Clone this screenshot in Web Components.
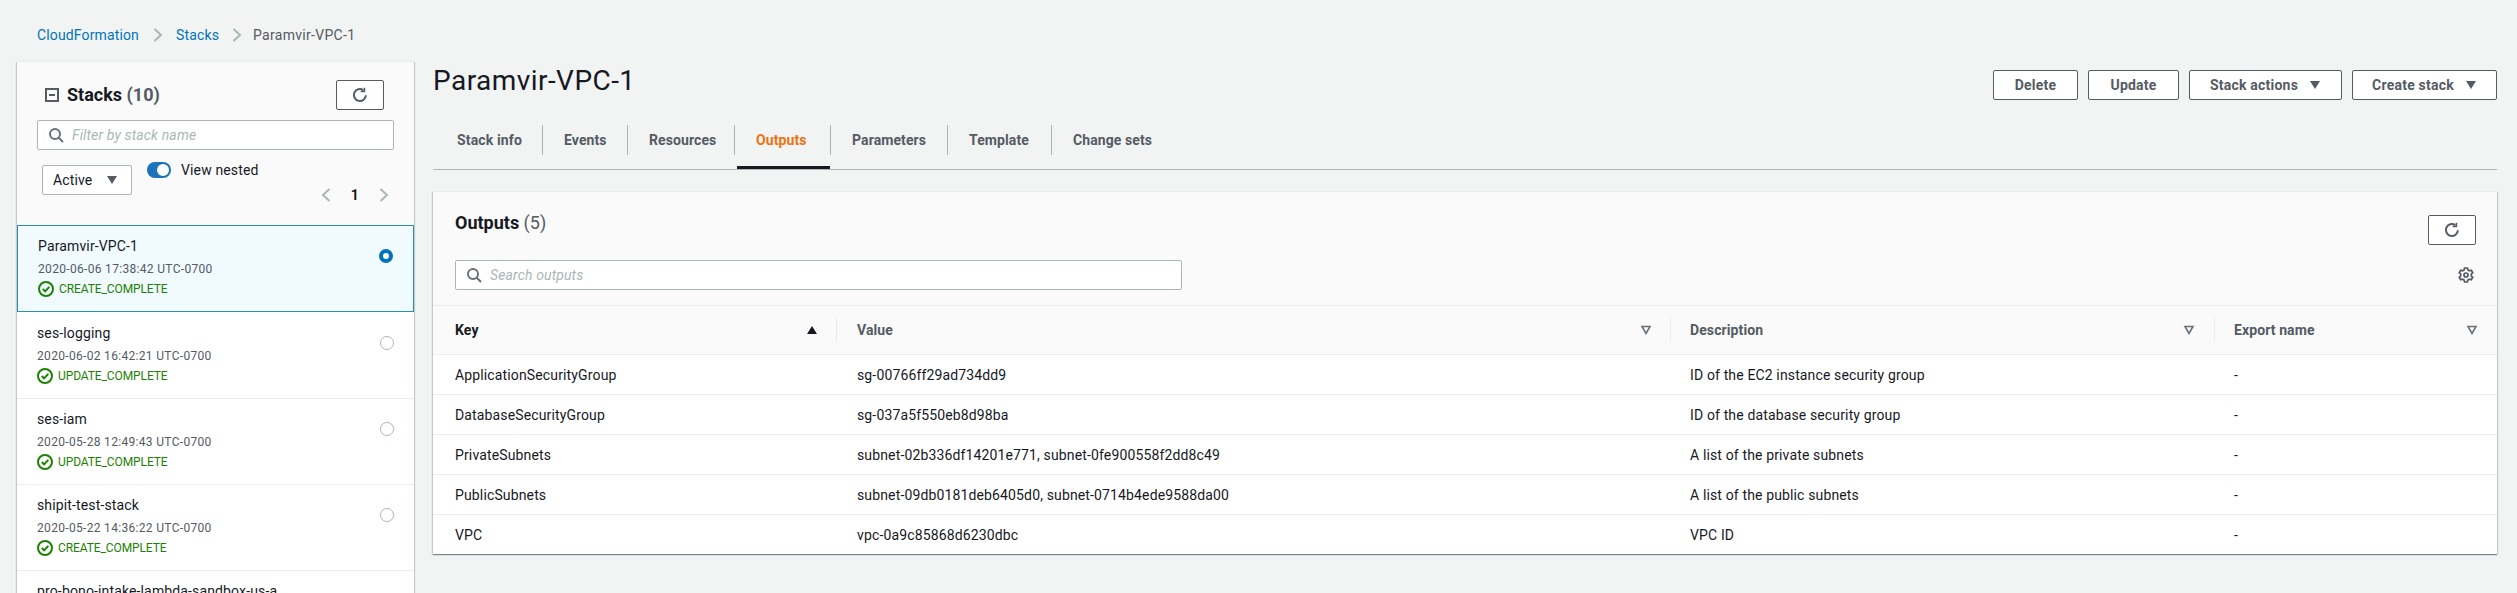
<!doctype html>
<html lang="en"><head><meta charset="utf-8"><title>Paramvir-VPC-1</title>
<style>
html,body{margin:0;height:100%;overflow:hidden;background:#f2f3f3}
body{font:14px/20px Roboto,sans-serif;letter-spacing:.14px;color:#16191f}
</style></head><body>
<cf-app></cf-app>
<script>
const ICON={
 refresh:'<svg viewBox="0 0 16 16" width="16" height="16" fill="none" stroke="#545b64" stroke-width="2"><path d="M13.9 8.2A6 6 0 1 1 11.2 3"/><path d="M12.4.8v3.6H8.8" stroke-width="1.6"/></svg>',
 search:'<svg viewBox="0 0 16 16" width="16" height="16" fill="none" stroke="#687078" stroke-width="2"><circle cx="7" cy="7" r="5"/><path d="M10.7 10.7L15 15"/></svg>',
 check:'<svg viewBox="0 0 16 16" width="16" height="16" fill="none" stroke="#1d8102" stroke-width="2"><circle cx="8" cy="8" r="7"/><path d="M4.8 8l2.3 2.4 4.2-4.6"/></svg>',
 caret:'<svg viewBox="0 0 12 10" width="12" height="10" fill="#545b64"><path d="M1 1h10L6 9z"/></svg>',
 up:'<svg viewBox="0 0 12 10" width="12" height="10" fill="#16191f"><path d="M6 1l5 8H1z"/></svg>',
 filter:'<svg viewBox="0 0 12 10" width="12" height="10" fill="none" stroke="#687078" stroke-width="1.6"><path d="M2 1.5h8L6 8.5z"/></svg>',
 gear:'<svg viewBox="0 0 16 16" width="16" height="16" fill="none" stroke="#545b64" stroke-width="1.7"><path d="M6.6 1h2.8l.5 1.9 1.5.9 1.9-.5 1.4 2.4-1.4 1.4v1.8l1.4 1.4-1.4 2.4-1.9-.5-1.5.9-.5 1.9H6.6l-.5-1.9-1.5-.9-1.9.5-1.4-2.4 1.4-1.4V7.1L1.3 5.7l1.4-2.4 1.9.5 1.5-.9z"/><circle cx="8" cy="8" r="2"/></svg>',
 minus:'<svg viewBox="0 0 14 14" width="14" height="14" fill="none" stroke="#545b64" stroke-width="2"><path d="M1 1h12v12H1zM4 7h6"/></svg>',
 chevL:'<svg viewBox="0 0 12 16" width="12" height="16" fill="none" stroke="#aab7b8" stroke-width="2"><path d="M9.5 2L3 8l6.5 6"/></svg>',
 chevR:'<svg viewBox="0 0 12 16" width="12" height="16" fill="none" stroke="#aab7b8" stroke-width="2"><path d="M2.5 2L9 8l-6.5 6"/></svg>'
};
function el(name,html,css){
 customElements.define(name,class extends HTMLElement{
  constructor(){super();const r=this.attachShadow({mode:'open'});
   r.innerHTML='<style>'+css+'</style>'+(typeof html==='function'?html(this):html)}
 });
}
const attrs=e=>Object.fromEntries([...e.attributes].map(a=>[a.name,a.value]));

class AwsButton extends HTMLElement{
 connectedCallback(){ if(this.shadowRoot)return;
  const r=this.attachShadow({mode:'open'});
  const a=attrs(this);
  r.innerHTML=`<style>:host{display:inline-flex;box-sizing:border-box;height:30px;width:${a.w||'auto'}px;align-items:center;justify-content:center;gap:11px;background:#fff;border:1px solid #545b64;border-radius:2px;color:#545b64;font-weight:700;font-size:14px;letter-spacing:.22px}svg{display:block}</style><slot></slot>${a.caret!==undefined?ICON.caret:''}`;
 }
}
customElements.define('aws-button',AwsButton);

class IconButton extends HTMLElement{
 connectedCallback(){ if(this.shadowRoot)return;
  const r=this.attachShadow({mode:'open'});
  r.innerHTML=`<style>:host{display:flex;flex:none;box-sizing:border-box;width:48px;height:30px;align-items:center;justify-content:center;background:#fff;border:1px solid #545b64;border-radius:2px}svg{display:block}</style>${ICON.refresh}`;
 }
}
customElements.define('icon-button',IconButton);

class SearchBox extends HTMLElement{
 connectedCallback(){ if(this.shadowRoot)return;
  const r=this.attachShadow({mode:'open'});
  r.innerHTML=`<style>:host{display:flex;box-sizing:border-box;height:30px;align-items:center;gap:8px;padding-left:10px;background:#fff;border:1px solid #aab7b8;border-radius:2px;color:#aab7b8;font-style:italic;font-size:14px}svg{display:block}</style>${ICON.search}<slot></slot>`;
 }
}
customElements.define('search-box',SearchBox);

el('cf-breadcrumb',`<a>CloudFormation</a><span class="s">${ICON.chevR}</span><a>Stacks</a><span class="s l">${ICON.chevR}</span><b>Paramvir-VPC-1</b>`,
 `:host{display:flex;align-items:center;height:20px;padding:25px 0 16px 20px;color:#545b64}
  a{color:#0073bb}b{font-weight:400;letter-spacing:.3px}.s{display:flex;margin:0 12px 0 13px}.l{margin:0 10px 0 12px}svg{display:block}`);

class StackItem extends HTMLElement{
 connectedCallback(){ if(this.shadowRoot)return;
  const a=attrs(this),r=this.attachShadow({mode:'open'});
  const more=a.date?`<div class="d">${a.date}</div><div class="st">${ICON.check}<span>${a.status}</span></div>`:'';
  r.innerHTML=`<style>
  :host{display:flex;box-sizing:border-box;height:86px;padding:10px 20px 0;background:#fff;border-bottom:1px solid #eaeded;justify-content:space-between;align-items:flex-start;overflow:hidden}
  :host([selected]){height:87px;margin-bottom:1px;background:#f1faff;border:1px solid #2a8fb5;padding:10px 20px 0}
  .n{font-size:14px;line-height:20px;white-space:nowrap}
  .d{font-size:12px;line-height:16px;margin-top:5px;color:#545b64;letter-spacing:.32px}
  .st{display:flex;align-items:center;gap:5px;height:16px;margin-top:4px;font-size:12px;color:#1d8102;letter-spacing:-.1px}
  .r{flex:none;box-sizing:border-box;width:14px;height:14px;margin-top:13px;border-radius:50%;border:1px solid #aab7b8;background:#fff}
  :host([selected]) .r{border:4px solid #0073bb}
  svg{display:block}
  </style><div><div class="n">${a.name}</div>${more}</div>${a.date?'<div class="r"></div>':''}`;
 }
}
customElements.define('stack-item',StackItem);

el('stack-panel',`
 <div class="hd">
  <div class="title"><span class="min">${ICON.minus}</span><h2>Stacks <i>(10)</i></h2><icon-button></icon-button></div>
  <search-box class="q">Filter by stack name</search-box>
  <div class="ctl">
   <div class="sel">Active ${ICON.caret}</div>
   <div class="col">
    <div class="tog"><span class="sw"><span class="kn"></span></span><span>View nested</span></div>
    <div class="pg">${ICON.chevL}<b>1</b>${ICON.chevR}</div>
   </div>
  </div>
 </div>
 <div class="list"><slot></slot></div>`,
 `:host{display:block;flex:none;box-sizing:border-box;width:397px;height:600px;background:#fff;overflow:hidden;border-top:1px solid #eaeded;box-shadow:0 1px 1px rgba(0,28,36,.3),1px 1px 1px rgba(0,28,36,.15),-1px 1px 1px rgba(0,28,36,.15)}
  .hd{box-sizing:border-box;height:163px;background:#fafafa;padding:18px 20px 0}
  .title{display:flex;align-items:center;height:30px;padding-left:8px;padding-right:10px}
  .min{display:flex;margin-right:8px}
  .min svg,.sel svg,.pg svg{display:block}
  h2{flex:1;margin:0;font-size:18px;line-height:22px;font-weight:700;letter-spacing:0}
  h2 i{font-style:normal;color:#545b64;font-weight:700}
  .q{margin-top:10px}
  .ctl{display:flex;margin-top:12px;align-items:flex-start}
  .sel{display:flex;box-sizing:border-box;width:90px;height:30px;margin:3px 0 0 5px;align-items:center;justify-content:space-between;padding:0 13px 0 10px;background:#fff;border:1px solid #aab7b8;border-radius:2px}
  .col{flex:1;padding-left:15px}
  .tog{display:flex;align-items:center;gap:10px;height:16px}
  .sw{display:flex;box-sizing:border-box;width:24px;height:16px;border-radius:8px;background:#1a73bb;padding:2px 2px;justify-content:flex-end}
  .kn{display:block;width:12px;height:12px;border-radius:50%;background:#fff}
  .pg{display:flex;justify-content:flex-end;align-items:center;height:20px;margin-top:7px;padding-right:4px}
  .pg b{margin:0 19px;font-size:14px;font-weight:700}`);

el('cf-tabs',h=>{const t=[['Stack info',109],['Events',85],['Resources',107],['Outputs',96,1],['Parameters',117],['Template',104],['Change sets',120]];
  return t.map(x=>`<div class="t${x[2]?' on':''}" style="width:${x[1]}px"><span class="l">${x[0]}</span></div>`).join('')},
 `:host{display:flex;border-bottom:1px solid #aab7b8;height:44px;padding-left:1px}
  .t{position:relative;box-sizing:border-box;height:30px;padding-left:21px;border-right:1px solid #aab7b8;font-weight:700;color:#545b64;line-height:30px;letter-spacing:.1px;white-space:nowrap}
  .t:last-child{border:0}
  .t:first-of-type{padding-left:23px;letter-spacing:.15px}
  .on{color:#ec7211}
  .on::after{content:"";position:absolute;left:2px;right:0;top:41px;height:3px;background:#16191f}`);

class OutRow extends HTMLElement{
 connectedCallback(){ if(this.shadowRoot)return;
  const a=attrs(this),r=this.attachShadow({mode:'open'});
  r.innerHTML=`<style>:host{display:grid;grid-template-columns:403px 834px 544px 1fr;box-sizing:border-box;height:40px;align-items:center;background:#fff;border-top:1px solid #eaeded}
  div{white-space:nowrap}div:nth-of-type(1){padding-left:22px}div:nth-of-type(2){padding-left:21px}div:nth-of-type(3),div:nth-of-type(4){padding-left:20px}</style>
  <div>${a.k}</div><div>${a.v}</div><div>${a.d}</div><div>-</div>`;
 }
}
customElements.define('out-row',OutRow);

el('out-head',`
 <div class="c"><span>Key</span><span class="ic">${ICON.up}</span></div>
 <div class="c v"><span>Value</span><span class="ic">${ICON.filter}</span></div>
 <div class="c v d"><span>Description</span><span class="ic">${ICON.filter}</span></div>
 <div class="c v e"><span>Export name</span><span class="ic">${ICON.filter}</span></div>`,
 `:host{display:grid;grid-template-columns:403px 834px 544px 1fr;height:48px;align-items:center;background:#fafafa;border-top:1px solid #eaeded;font-weight:700;color:#545b64;letter-spacing:.1px}
  .c{display:flex;box-sizing:border-box;height:24px;align-items:center;justify-content:space-between;padding:0 18px 0 22px}
  .c:first-of-type{color:#16191f}
  .v{border-left:1px solid #eaeded;padding-left:20px}
  .d{padding-left:19px;padding-right:19px}
  .e{padding-left:19px;padding-right:19px}
  .ic svg{display:block}`);

el('outputs-card',`
 <div class="hd">
  <div class="r1"><h2>Outputs <i>(5)</i></h2><icon-button></icon-button></div>
  <div class="r2"><search-box class="q">Search outputs</search-box><span class="g">${ICON.gear}</span></div>
 </div>
 <out-head></out-head>
 <slot></slot>`,
 `:host{display:block;margin-top:21px;background:#fff;border-top:1px solid #eaeded;box-shadow:0 1px 1px rgba(0,28,36,.3),1px 1px 1px rgba(0,28,36,.15),-1px 1px 1px rgba(0,28,36,.15)}
  .hd{box-sizing:border-box;height:113px;background:#fafafa;padding:23px 21px 0 22px}
  .r1{display:flex;justify-content:space-between;align-items:flex-start;height:45px}
  h2{margin:-3px 0 0;font-size:18px;line-height:22px;font-weight:700;letter-spacing:0}
  h2 i{font-style:normal;font-weight:400;color:#545b64}
  .r2{display:flex;justify-content:space-between;align-items:center}
  .q{width:727px}
  .g{display:block;margin-right:2px}
  .g svg{display:block}`);

el('cf-detail',`
 <div class="top"><h1>Paramvir-VPC-1</h1><div class="btns">
  <aws-button w="85">Delete</aws-button><aws-button w="91">Update</aws-button><aws-button w="153" caret>Stack actions</aws-button><aws-button w="145" caret>Create stack</aws-button></div></div>
 <cf-tabs></cf-tabs>
 <slot></slot>`,
 `:host{display:block;flex:1;min-width:0}
  .top{display:flex;justify-content:space-between;align-items:flex-start;height:64px;box-sizing:border-box;padding-top:9px}
  h1{margin:0;font-size:28px;line-height:22px;font-weight:400;letter-spacing:.45px}
  .btns{display:flex;gap:10px}`);

el('cf-app',`
 <cf-breadcrumb></cf-breadcrumb>
 <div class="m">
  <stack-panel>
   <stack-item selected name="Paramvir-VPC-1" date="2020-06-06 17:38:42 UTC-0700" status="CREATE_COMPLETE"></stack-item>
   <stack-item name="ses-logging" date="2020-06-02 16:42:21 UTC-0700" status="UPDATE_COMPLETE"></stack-item>
   <stack-item name="ses-iam" date="2020-05-28 12:49:43 UTC-0700" status="UPDATE_COMPLETE"></stack-item>
   <stack-item name="shipit-test-stack" date="2020-05-22 14:36:22 UTC-0700" status="CREATE_COMPLETE"></stack-item>
   <stack-item name="pro-bono-intake-lambda-sandbox-us-a"></stack-item>
  </stack-panel>
  <cf-detail>
   <outputs-card>
    <out-row k="ApplicationSecurityGroup" v="sg-00766ff29ad734dd9" d="ID of the EC2 instance security group"></out-row>
    <out-row k="DatabaseSecurityGroup" v="sg-037a5f550eb8d98ba" d="ID of the database security group"></out-row>
    <out-row k="PrivateSubnets" v="subnet-02b336df14201e771, subnet-0fe900558f2dd8c49" d="A list of the private subnets"></out-row>
    <out-row k="PublicSubnets" v="subnet-09db0181deb6405d0, subnet-0714b4ede9588da00" d="A list of the public subnets"></out-row>
    <out-row k="VPC" v="vpc-0a9c85868d6230dbc" d="VPC ID"></out-row>
   </outputs-card>
  </cf-detail>
 </div>`,
 `:host{display:block;height:593px;overflow:hidden;padding:0 20px 0 17px;box-sizing:border-box}
  .m{display:flex;gap:19px;align-items:flex-start}`);
</script></body></html>
